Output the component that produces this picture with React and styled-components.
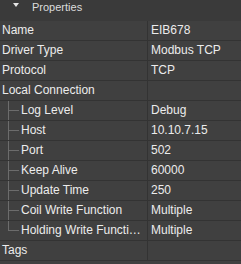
import React from 'react';
import styled, { createGlobalStyle } from 'styled-components';

const GlobalStyle = createGlobalStyle`
  html, body {
    margin: 0;
    padding: 0;
    background: #404040;
  }
  body {
    font-family: "Liberation Sans", Arial, sans-serif;
    font-size: 12px;
    color: #ececec;
  }
`;

const Panel = styled.div`
  width: 241px;
  height: 264px;
  background: #404040;
  overflow: hidden;
`;

const Header = styled.div`
  display: flex;
  align-items: flex-start;
  height: 21px;
  box-sizing: border-box;
  padding: 1px 0 0 13px;
  gap: 13px;
  background: #3a3a3a;
`;

const Caret = styled.svg`
  width: 6px;
  height: 5px;
  margin-top: 2px;
`;

const HeaderTitle = styled.span`
  font-size: 11px;
  line-height: 12px;
  color: #dcdcdc;
`;

const Row = styled.div`
  display: grid;
  grid-template-columns: 148px 1fr;
  height: 20px;
  box-sizing: border-box;
  border-bottom: 1px solid #333333;
`;

const NameCell = styled.div`
  position: relative;
  padding: 0 6px 0 ${p => (p.$child ? 21 : 2)}px;
  border-right: 1px solid #333333;
  line-height: 19px;
  white-space: nowrap;
  overflow: hidden;
  text-overflow: ellipsis;
`;

const ValueCell = styled.div`
  padding-left: 3px;
  line-height: 19px;
  white-space: nowrap;
  overflow: hidden;
`;

const Guide = styled.span`
  position: absolute;
  left: 8px;
  top: 0;
  width: 10px;
  height: ${p => (p.$last ? '10px' : '19px')};
  border-left: 1px solid #6c6c6c;

  &::after {
    content: '';
    position: absolute;
    left: 0;
    top: 9px;
    width: 10px;
    border-top: 1px solid #6c6c6c;
  }
`;

const rows = [
  { name: 'Name', value: 'EIB678' },
  { name: 'Driver Type', value: 'Modbus TCP' },
  { name: 'Protocol', value: 'TCP' },
  { name: 'Local Connection', value: '' },
  { name: 'Log Level', value: 'Debug', child: true },
  { name: 'Host', value: '10.10.7.15', child: true },
  { name: 'Port', value: '502', child: true },
  { name: 'Keep Alive', value: '60000', child: true },
  { name: 'Update Time', value: '250', child: true },
  { name: 'Coil Write Function', value: 'Multiple', child: true },
  { name: 'Holding Write Function', value: 'Multiple', child: true, last: true },
  { name: 'Tags', value: '' },
];

export default function App() {
  return (
    <>
      <GlobalStyle />
      <Panel>
        <Header>
          <Caret viewBox="0 0 6 5">
            <polygon points="0,0 6,0 3,4" fill="#e6e6e6" />
          </Caret>
          <HeaderTitle>Properties</HeaderTitle>
        </Header>
        {rows.map(r => (
          <Row key={r.name}>
            <NameCell $child={r.child}>
              {r.child && <Guide $last={r.last} />}
              {r.name}
            </NameCell>
            <ValueCell>{r.value}</ValueCell>
          </Row>
        ))}
      </Panel>
    </>
  );
}
